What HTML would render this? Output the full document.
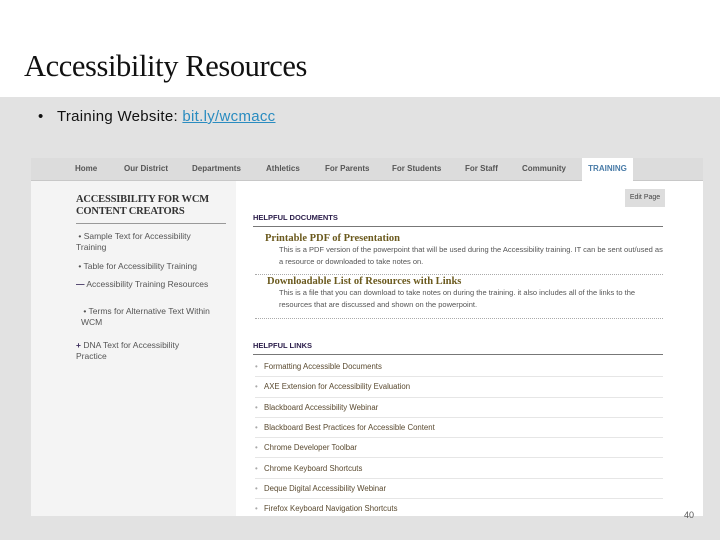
<!DOCTYPE html>
<html><head><meta charset="utf-8"><style>
*{margin:0;padding:0;box-sizing:border-box}
body{width:720px;height:540px;position:relative;overflow:hidden;background:#fff;font-family:"Liberation Sans",sans-serif}
.band{position:absolute;left:0;top:97px;width:720px;height:443px;background:#e2e2e2}
h1{position:absolute;left:24px;top:49px;font:400 30.5px "Liberation Serif",serif;color:#111;letter-spacing:-0.4px}
.bul{position:absolute;left:38px;top:108px;font-size:15px;color:#111;letter-spacing:0.3px}
.bul a{color:#2a8cc0;text-decoration:underline}
.shot{position:absolute;left:31px;top:158px;width:672px;height:358px;background:#fff;overflow:hidden}
.nav{position:absolute;left:0;top:0;width:672px;height:23px;background:#dcdcdc;border-bottom:1px solid #c8c8c8}
.nav span{position:absolute;top:6px;font-size:8px;font-weight:bold;color:#555}
.nav .tr{background:#fff;top:0;height:24px;padding-top:6px;width:51px;text-align:center;color:#4a7ca8}
.side{position:absolute;left:0;top:23px;width:205px;height:335px;background:#f4f4f4}
.st{position:absolute;left:45px;top:13px;font:bold 10.5px "Liberation Serif",serif;color:#333;line-height:12px;width:150px;border-bottom:1px solid #999;padding-bottom:5px;letter-spacing:-0.2px}
.si{position:absolute;left:45px;font-size:8.5px;color:#555;line-height:11px;width:135px}
.main .h{position:absolute;left:222px;font-size:7.5px;font-weight:bold;color:#2b1d4a;width:410px;border-bottom:1px solid #777;padding-bottom:4px}
.doc{position:absolute;left:234px;font:bold 10.5px "Liberation Serif",serif;color:#6b5a1e}
.dd{position:absolute;left:248px;font-size:7.5px;color:#555;line-height:11.5px;width:390px}
.dl{position:absolute;left:224px;width:408px;border-top:1px dotted #aaa}
.lk{position:absolute;left:224px;width:408px;height:20.3px;border-bottom:1px solid #e6e6e6;font-size:7.8px;color:#5a4a30;padding-top:5px;padding-left:9px}
.lk:before{content:"•";position:absolute;left:0;color:#aaa}
.edit{position:absolute;left:594px;top:31px;width:40px;height:18px;background:#ddd;font-size:7px;color:#444;text-align:center;padding-top:5px}
.pn{position:absolute;left:684px;top:510px;font-size:9px;color:#555}
</style></head><body>
<h1>Accessibility Resources</h1>
<div class="band"></div>
<div class="bul">•&nbsp;&nbsp;&nbsp;Training Website: <a>bit.ly/wcmacc</a></div>
<div class="shot">
<div class="nav">
<span style="left:44px">Home</span><span style="left:93px">Our District</span><span style="left:161px">Departments</span><span style="left:235px">Athletics</span><span style="left:294px">For Parents</span><span style="left:361px">For Students</span><span style="left:434px">For Staff</span><span style="left:491px">Community</span><span class="tr" style="left:551px">TRAINING</span>
</div>
<div class="side">
<div class="st">ACCESSIBILITY FOR WCM CONTENT CREATORS</div>
<div class="si" style="top:50px">&nbsp;• Sample Text for Accessibility Training</div>
<div class="si" style="top:80px">&nbsp;• Table for Accessibility Training</div>
<div class="si" style="top:98px"><b style="color:#3a2a5a">—</b> Accessibility Training Resources</div>
<div class="si" style="top:125px;left:50px">&nbsp;• Terms for Alternative Text Within WCM</div>
<div class="si" style="top:159px"><b style="color:#3a2a5a">+</b> DNA Text for Accessibility Practice</div>
</div>
<div class="main">
<div class="edit">Edit Page</div>
<div class="h" style="top:55px">HELPFUL DOCUMENTS</div>
<div class="doc" style="top:75px">Printable PDF of Presentation</div>
<div class="dd" style="top:86px">This is a PDF version of the powerpoint that will be used during the Accessibility training. IT can be sent out/used as a resource or downloaded to take notes on.</div>
<div class="dl" style="top:116px"></div>
<div class="doc" style="top:118px;left:236px">Downloadable List of Resources with Links</div>
<div class="dd" style="top:129px">This is a file that you can download to take notes on during the training. it also includes all of the links to the resources that are discussed and shown on the powerpoint.</div>
<div class="dl" style="top:160px"></div>
<div class="h" style="top:183px">HELPFUL LINKS</div>
<div class="lk" style="top:199px">Formatting Accessible Documents</div>
<div class="lk" style="top:219.3px">AXE Extension for Accessibility Evaluation</div>
<div class="lk" style="top:239.6px">Blackboard Accessibility Webinar</div>
<div class="lk" style="top:259.9px">Blackboard Best Practices for Accessible Content</div>
<div class="lk" style="top:280.2px">Chrome Developer Toolbar</div>
<div class="lk" style="top:300.5px">Chrome Keyboard Shortcuts</div>
<div class="lk" style="top:320.8px">Deque Digital Accessibility Webinar</div>
<div class="lk" style="top:341.1px">Firefox Keyboard Navigation Shortcuts</div>
</div>
</div>
<div class="pn">40</div>
</body></html>
